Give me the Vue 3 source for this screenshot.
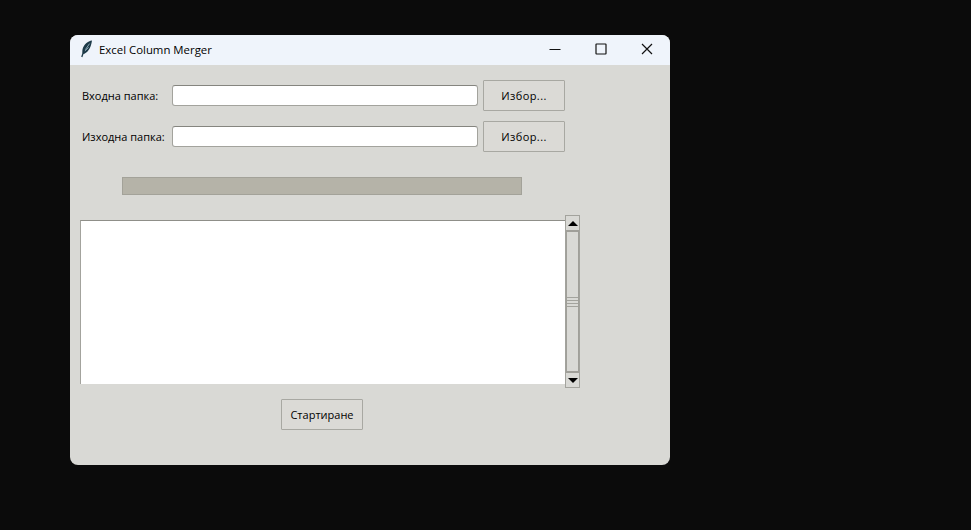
<template>
  <div class="desktop">
    <div class="window">
      <div class="titlebar">
        <svg class="app-icon" width="14" height="18" viewBox="0 0 14 18">
          <path d="M12 0.5C8 1 3.6 4.6 2.6 9 2.1 11.2 2.3 12.8 3 14 7 13.6 11 8.4 12 0.5Z" fill="#1d3a48" />
          <path d="M9.6 3.6 5.4 9.6M8.6 7.4 4.8 11" stroke="#a8c4d2" stroke-width="0.8" fill="none" />
          <path d="M4 10.5 1.8 17" stroke="#1d3a48" stroke-width="1.3" fill="none" />
        </svg>
        <span class="title">Excel Column Merger</span>
        <div class="win-controls">
          <button class="win-btn">
            <svg width="12" height="12" viewBox="0 0 12 12"><path d="M0.5 6.5H11.5" stroke="#111" stroke-width="1.2" /></svg>
          </button>
          <button class="win-btn">
            <svg width="12" height="12" viewBox="0 0 12 12"><rect x="1" y="1" width="10" height="10" rx="0.5" fill="none" stroke="#111" stroke-width="1.2" /></svg>
          </button>
          <button class="win-btn">
            <svg width="12" height="12" viewBox="0 0 12 12"><path d="M1 1 11 11M11 1 1 11" stroke="#111" stroke-width="1.2" /></svg>
          </button>
        </div>
      </div>

      <div class="content">
        <div v-for="row in folderRows" :key="row" class="folder-row">
          <label class="folder-label">{{ row }}</label>
          <input class="folder-input" type="text" />
          <button class="tk-btn pick-btn">Избор...</button>
        </div>

        <div class="progress"></div>

        <div class="log">
          <div class="log-text"></div>
          <div class="scrollbar">
            <div class="arrow-box"><span class="arrow up"></span></div>
            <div class="thumb">
              <span class="grip"></span>
              <span class="grip"></span>
              <span class="grip"></span>
              <span class="grip"></span>
            </div>
            <div class="arrow-box"><span class="arrow down"></span></div>
          </div>
        </div>

        <div class="start-row">
          <button class="tk-btn">Стартиране</button>
        </div>
      </div>
    </div>
  </div>
</template>

<script setup>
const folderRows = ['Входна папка:', 'Изходна папка:']
</script>

<style>
html, body {
  margin: 0;
  background: #0b0b0b;
}
</style>

<style scoped>
.desktop {
  width: 971px;
  height: 530px;
  padding: 35px 0 0 70px;
  box-sizing: border-box;
  background: #0b0b0b;
  overflow: hidden;
  font-family: "Open Sans", "Noto Sans", sans-serif;
  color: #000;
}

.window {
  width: 600px;
  height: 430px;
  border-radius: 8px;
  overflow: hidden;
  background: #d9d9d5;
}

.titlebar {
  height: 30px;
  background: #eff4fb;
  display: flex;
  align-items: center;
  padding-left: 10px;
}

.app-icon {
  margin-right: 5px;
  margin-top: -3px;
}

.title {
  font-size: 11.4px;
  margin-top: -1px;
}

.win-controls {
  margin-left: auto;
  display: flex;
  margin-top: -2px;
}

.win-btn {
  width: 46px;
  height: 28px;
  padding: 0;
  border: none;
  background: none;
  display: flex;
  align-items: center;
  justify-content: center;
}

.content {
  padding: 15px 0 0 10px;
}

.folder-row {
  display: flex;
  align-items: center;
  height: 31px;
  margin-bottom: 10px;
}

.folder-label {
  width: 90px;
  padding-left: 2px;
  box-sizing: border-box;
  font-size: 11px;
  flex: none;
}

.folder-input {
  width: 306px;
  height: 21px;
  box-sizing: border-box;
  border: 1px solid #a3a39d;
  border-top-color: #85857f;
  border-radius: 3px;
  background: #fff;
  margin: 0 5px 0 2px;
  padding: 0;
  outline: none;
}

.tk-btn {
  width: 82px;
  height: 31px;
  box-sizing: border-box;
  border: 1px solid #a8a8a2;
  border-radius: 1px;
  background: #dbdad6;
  font-family: inherit;
  font-size: 11px;
  color: #000;
  padding: 0;
}

.pick-btn {
  letter-spacing: 0.4px;
}

.progress {
  width: 400px;
  height: 18px;
  box-sizing: border-box;
  margin: 25px 0 20px 42px;
  background: #b5b3a8;
  border: 1px solid #a3a299;
}

.log {
  display: flex;
  align-items: flex-start;
}

.log-text {
  width: 485px;
  height: 164px;
  box-sizing: border-box;
  margin-top: 5px;
  background: #fff;
  border-top: 1px solid #8f8f89;
  border-left: 1px solid #a3a39d;
}

.scrollbar {
  width: 15px;
  height: 173px;
  box-sizing: border-box;
  border: 1px solid #a3a39d;
  display: flex;
  flex-direction: column;
  background: #d9d9d5;
}

.arrow-box {
  height: 14px;
  flex: none;
  display: flex;
  align-items: center;
  justify-content: center;
}

.arrow {
  width: 0;
  height: 0;
  border-left: 5px solid transparent;
  border-right: 5px solid transparent;
}

.arrow.up {
  border-bottom: 5px solid #000;
}

.arrow.down {
  border-top: 5px solid #000;
}

.thumb {
  flex: 1;
  border-top: 2px solid #a09f99;
  border-bottom: 2px solid #a09f99;
  border-left: 1px solid #a09f99;
  border-right: 1px solid #a09f99;
  display: flex;
  flex-direction: column;
  align-items: stretch;
  justify-content: center;
  gap: 2px;
}

.grip {
  height: 1px;
  background: #a3a39d;
}

.start-row {
  padding: 11px 0 0 201px;
}
</style>
